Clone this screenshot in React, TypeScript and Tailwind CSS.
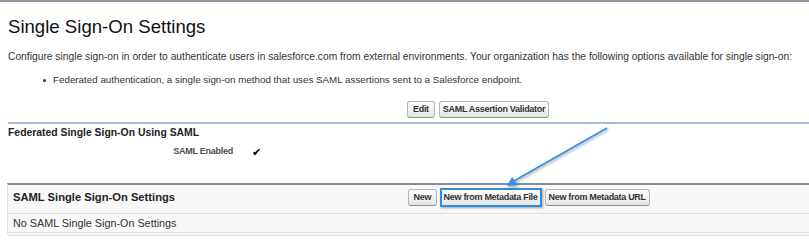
import React from 'react';

const PLAIN = 'h-[17px] px-[3px] rounded-[3px] border border-[#b5b5b5] border-b-[#8f8f8f]';

// Salesforce-classic style button
function Btn({ children, frame = PLAIN }: { children: React.ReactNode; frame?: string }) {
  return (
    <button className={`${frame} bg-gradient-to-b from-white to-[#e4e4e4] text-[9px] leading-[15px] font-bold tracking-[-0.3px] text-[#333]`}>
      {children}
    </button>
  );
}

export default function App() {
  return (
    <div className="relative w-[809px] h-[244px] bg-white overflow-hidden font-['Liberation_Sans',Arial,sans-serif] text-[#222]">
      <div className="h-[2px] bg-[#8d95a5]" />

      {/* Header */}
      <div className="pl-[8px] pt-[14px]">
        <h1 className="text-[18.6px] leading-[22px] text-[#111]">Single Sign-On Settings</h1>
        <p className="mt-[12px] text-[10.28px] leading-[14px] text-[#333] whitespace-nowrap">
          Configure single sign-on in order to authenticate users in salesforce.com from external environments. Your organization has the following options available for single sign-on:
        </p>
        <div className="mt-[9px] ml-[35px] flex items-center text-[9.8px] leading-[14px] text-[#333]">
          <span className="w-[3px] h-[3px] rounded-full bg-[#333]" />
          <span className="ml-[7px]">Federated authentication, a single sign-on method that uses SAML assertions sent to a Salesforce endpoint.</span>
        </div>
      </div>

      {/* Edit buttons */}
      <div className="flex gap-[4px] pl-[407px] mt-[14px]">
        <Btn frame="h-[17px] px-[5px] rounded-[3px] border border-[#b5b5b5] border-b-[#8f8f8f]">Edit</Btn>
        <Btn>SAML Assertion Validator</Btn>
      </div>

      {/* Federated SSO */}
      <div className="ml-[8px] mt-[4px] border-t-2 border-[#a9b7d8]">
        <div className="pt-[3px] text-[10.4px] leading-[12px] font-bold text-[#222]">
          Federated Single Sign-On Using SAML
        </div>
        <div className="flex items-center mt-[7px] h-[12px]">
          <div className="w-[225px] text-right text-[9px] tracking-[-0.25px] font-bold text-[#4a4a56]">SAML Enabled</div>
          <div className="ml-[19px] text-[11px] leading-[12px] text-black">✔</div>
        </div>
      </div>

      {/* SAML SSO settings block */}
      <div className="ml-[7px] mt-[25px] h-[53px] border-t-2 border-[#848c9c] border-l border-l-[#e2e2e2] border-b border-b-[#e2e2e2] rounded-bl-[4px] bg-[#f8f8f8]">
        <div className="flex items-center h-[24px]">
          <div className="w-[400px] pl-[5px] text-[11.2px] font-bold text-[#222]">SAML Single Sign-On Settings</div>
          <div className="flex items-center gap-[3px]">
            <Btn frame="h-[17px] px-[4.5px] rounded-[3px] border border-[#b5b5b5] border-b-[#8f8f8f]">New</Btn>
            <Btn frame="h-[19px] px-[2px] border-2 border-[#2a8fe3] shadow-[1px_1px_2px_rgba(0,0,0,0.35)]">
              New from Metadata File
            </Btn>
            <Btn>New from Metadata URL</Btn>
          </div>
        </div>
        <div className="mt-[4px] h-[20px] border-t border-b border-[#e0e0e0] pl-[5px] text-[10.8px] leading-[18px] text-[#333]">
          No SAML Single Sign-On Settings
        </div>
      </div>

      {/* Callout arrow */}
      <svg className="absolute left-0 top-0 pointer-events-none" width="809" height="244">
        <defs>
          <filter id="sh" x="-20%" y="-20%" width="140%" height="140%">
            <feDropShadow dx="1" dy="1.5" stdDeviation="1" floodColor="#000" floodOpacity="0.35" />
          </filter>
        </defs>
        <g filter="url(#sh)">
          <line x1="607" y1="128" x2="514" y2="181" stroke="#3b8fe8" strokeWidth="2" />
          <polygon points="507,186 512,177 518,185" fill="#3b8fe8" />
        </g>
      </svg>
    </div>
  );
}
